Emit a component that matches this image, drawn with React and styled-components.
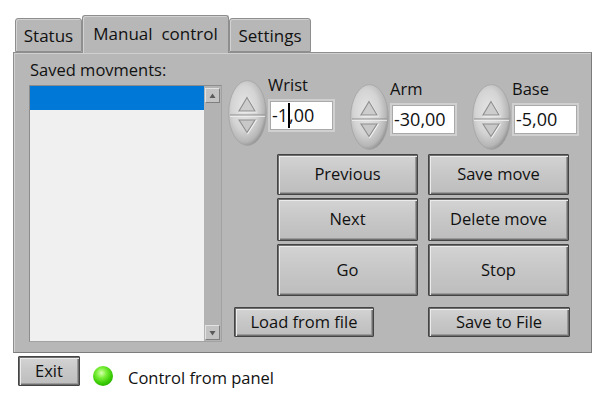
import styled, { createGlobalStyle } from 'styled-components';

const FONT = `"Open Sans", "Noto Sans", "Liberation Sans", sans-serif`;
const PANEL = '#b7b7b7';

const GlobalStyle = createGlobalStyle`
  html, body {
    margin: 0;
    padding: 0;
    background: #fff;
  }
  * {
    box-sizing: border-box;
  }
`;

const Window = styled.div`
  width: 605px;
  height: 400px;
  padding: 15px 0 0 13px;
  font-family: ${FONT};
  color: #111;
  overflow: hidden;
`;

const TabStrip = styled.div`
  display: flex;
  align-items: flex-end;
  height: 37px;
  padding-left: 2px;
  position: relative;
  z-index: 1;
`;

const Tab = styled.div`
  width: ${(p) => p.$width}px;
  height: ${(p) => (p.$active ? 38 : 34)}px;
  margin-bottom: ${(p) => (p.$active ? -1 : 0)}px;
  padding-top: ${(p) => (p.$active ? 8 : 7)}px;
  text-align: center;
  font-size: 17px;
  line-height: 20px;
  white-space: pre;
  background: ${PANEL};
  border: 1px solid #8e8e8e;
  border-bottom: ${(p) => (p.$active ? 'none' : '1px solid #8e8e8e')};
  border-radius: 3px 3px 0 0;
  box-shadow: inset 1px 1px 0 #d2d2d2;
`;

const Panel = styled.div`
  width: 579px;
  height: 301px;
  display: flex;
  padding: 7px 0 0 15px;
  background: ${PANEL};
  border: 1px solid #8e8e8e;
  border-right-color: #7c7c7c;
  border-bottom-color: #7c7c7c;
  box-shadow: inset 1px 1px 0 #d0d0d0;
`;

const LeftColumn = styled.div`
  width: 193px;
  display: flex;
  flex-direction: column;
`;

const Caption = styled.div`
  font-size: 16.5px;
  line-height: 20px;
  height: 20px;
  padding-left: 1px;
`;

const ListFrame = styled.div`
  margin-top: 5px;
  height: 257px;
  display: flex;
  border: 1px solid #8c8c8c;
  border-right-color: #a2a2a2;
  border-bottom-color: #a2a2a2;
`;

const ListItems = styled.div`
  flex: 1;
  background: #f0f0f0;
`;

const ListRow = styled.div`
  height: 24px;
  background: ${(p) => (p.$selected ? '#0078d7' : 'transparent')};
`;

const ScrollBar = styled.div`
  width: 17px;
  display: flex;
  flex-direction: column;
  justify-content: space-between;
  padding: 2px 1px 1px 1px;
  background: #b3b3b3;
`;

const ScrollArrow = styled.div`
  width: 15px;
  height: 15px;
  display: flex;
  align-items: center;
  justify-content: center;
  background: #c3c3c3;
  border: 1px solid #7f7f7f;
  border-top-color: #e2e2e2;
  border-left-color: #e2e2e2;
`;

const RightColumn = styled.div`
  margin-left: 6px;
  padding-top: 14px;
  display: flex;
  flex-direction: column;
`;

const SpinRow = styled.div`
  display: flex;
  align-items: flex-start;
  gap: 15px;
`;

const SpinGroup = styled.div`
  display: flex;
  align-items: flex-start;
  margin-top: ${(p) => p.$offset}px;
`;

const Spinner = styled.svg`
  display: block;
  margin-top: 6px;
  flex: none;
`;

const Field = styled.div`
  display: flex;
  flex-direction: column;
  margin-left: 1px;
`;

const FieldLabel = styled.div`
  font-size: 16.5px;
  line-height: 22px;
  height: 22px;
`;

const ValueBox = styled.div`
  margin-top: 3px;
  width: 67px;
  height: 33px;
  padding-left: 2px;
  background: #fff;
  border: 2px solid #d0d0d0;
  outline: 1px solid #a9a9a9;
  outline-offset: -3px;
  font-size: 18px;
  line-height: 29px;
  white-space: nowrap;
`;

const Caret = styled.span`
  display: inline-block;
  width: 0;
  height: 25px;
  margin: 0 -1px 0 0;
  border-left: 2px solid #000;
  vertical-align: -6px;
`;

const ButtonGrid = styled.div`
  margin: 4px 0 0 49px;
  display: grid;
  grid-template-columns: 141px 141px;
  grid-template-rows: 41px 43px 52px;
  column-gap: 10px;
  row-gap: 3px;
`;

const PanelButton = styled.button`
  width: ${(p) => (p.$w ? `${p.$w}px` : '100%')};
  height: ${(p) => (p.$h ? `${p.$h}px` : '100%')};
  padding: 0;
  font-family: ${FONT};
  font-size: 16.5px;
  line-height: 1;
  color: #111;
  border: 1px solid #444;
  border-radius: 1px;
  background: linear-gradient(#d4d4d4, #c9c9c9 40%, #bdbdbd);
  box-shadow: inset 1px 1px 0 #6e6e6e, inset 2px 2px 0 #ececec,
    inset -1px -1px 0 #6e6e6e, inset -2px -2px 0 #9a9a9a;
  cursor: default;
`;

const FileRow = styled.div`
  margin: 11px 0 0 6px;
  width: 336px;
  display: flex;
  justify-content: space-between;
`;

const BottomBar = styled.div`
  margin-top: 3px;
  padding-left: 5px;
  display: flex;
  align-items: flex-start;
`;

const Led = styled.span`
  width: 20px;
  height: 20px;
  margin: 10px 0 0 13px;
  border-radius: 50%;
  background: radial-gradient(
    circle at 42% 35%,
    #d8ffb0 0,
    #7cf03a 28%,
    #35c800 62%,
    #1f8f00 100%
  );
`;

const StatusText = styled.span`
  margin: 12px 0 0 15px;
  font-size: 16.5px;
  line-height: 20px;
`;

const SpinnerIcon = () => (
  <Spinner width="39" height="66" viewBox="0 0 39 66">
    <defs>
      <radialGradient id="spinFace" cx="42%" cy="42%" r="62%">
        <stop offset="0" stopColor="#e6e6e6" />
        <stop offset="0.55" stopColor="#d4d4d4" />
        <stop offset="0.85" stopColor="#b6b6b6" />
        <stop offset="1" stopColor="#8c8c8c" />
      </radialGradient>
    </defs>
    <ellipse cx="19.5" cy="33" rx="18.8" ry="32.4" fill="url(#spinFace)" stroke="#a3a3a3" strokeWidth="0.8" />
    <line x1="2" y1="35" x2="37" y2="35" stroke="#8c8c8c" strokeWidth="1" />
    <line x1="2" y1="36.3" x2="37" y2="36.3" stroke="#f0f0f0" strokeWidth="1" />
    <path d="M19 17.5 L11 31 H27 Z" fill="none" stroke="#f2f2f2" strokeWidth="1.4" transform="translate(0.8 0.8)" />
    <path d="M19 17.5 L11 31 H27 Z" fill="#cdcdcd" stroke="#8e8e8e" strokeWidth="1.1" />
    <path d="M11 40 H27 L19 52.5 Z" fill="none" stroke="#f2f2f2" strokeWidth="1.4" transform="translate(0.8 0.8)" />
    <path d="M11 40 H27 L19 52.5 Z" fill="#c8c8c8" stroke="#8e8e8e" strokeWidth="1.1" />
  </Spinner>
);

const ArrowGlyph = ({ down }) => (
  <svg width="7" height="6" viewBox="0 0 7 6">
    <path d={down ? 'M0.5 1 H6.5 L3.5 5.5 Z' : 'M3.5 0.5 L6.5 5 H0.5 Z'} fill="#5a5a5a" />
  </svg>
);

const axes = [
  { name: 'Wrist', value: '-1,00', offset: 0, caret: true },
  { name: 'Arm', value: '-30,00', offset: 4 },
  { name: 'Base', value: '-5,00', offset: 4 },
];

const moveButtons = ['Previous', 'Save move', 'Next', 'Delete move', 'Go', 'Stop'];

export default function App() {
  return (
    <>
      <GlobalStyle />
      <Window>
        <TabStrip>
          <Tab $width={67}>Status</Tab>
          <Tab $width={147} $active>Manual  control</Tab>
          <Tab $width={82}>Settings</Tab>
        </TabStrip>
        <Panel>
          <LeftColumn>
            <Caption>Saved movments:</Caption>
            <ListFrame>
              <ListItems>
                <ListRow $selected />
              </ListItems>
              <ScrollBar>
                <ScrollArrow>
                  <ArrowGlyph />
                </ScrollArrow>
                <ScrollArrow>
                  <ArrowGlyph down />
                </ScrollArrow>
              </ScrollBar>
            </ListFrame>
          </LeftColumn>
          <RightColumn>
            <SpinRow>
              {axes.map((a) => (
                <SpinGroup key={a.name} $offset={a.offset}>
                  <SpinnerIcon />
                  <Field>
                    <FieldLabel>{a.name}</FieldLabel>
                    <ValueBox>
                      {a.caret ? (
                        <>
                          -1<Caret />,00
                        </>
                      ) : (
                        a.value
                      )}
                    </ValueBox>
                  </Field>
                </SpinGroup>
              ))}
            </SpinRow>
            <ButtonGrid>
              {moveButtons.map((label) => (
                <PanelButton key={label}>{label}</PanelButton>
              ))}
            </ButtonGrid>
            <FileRow>
              <PanelButton $w={140} $h={30}>Load from file</PanelButton>
              <PanelButton $w={142} $h={30}>Save to File</PanelButton>
            </FileRow>
          </RightColumn>
        </Panel>
        <BottomBar>
          <PanelButton $w={62} $h={30}>Exit</PanelButton>
          <Led />
          <StatusText>Control from panel</StatusText>
        </BottomBar>
      </Window>
    </>
  );
}
